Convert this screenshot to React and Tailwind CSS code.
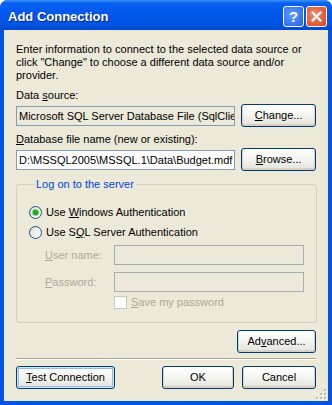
import React from "react";

const font = "font-['Tahoma','Liberation_Sans',sans-serif]";

const XpButton = ({ children, className = "", focused = false }) => (
  <button
    className={`h-[23px] rounded-[3px] border border-[#003c74] bg-gradient-to-b from-white via-[#f4f4f0] to-[#e3e2da] text-[11px] text-black ${
      focused ? "shadow-[inset_0_0_0_1px_#cee7ff,inset_0_0_0_2px_#98b8ea]" : "shadow-[inset_0_-1px_0_1px_#d6d0c5]"
    } ${className}`}
  >
    {children}
  </button>
);

const Radio = ({ checked }) => (
  <span className="flex h-[13px] w-[13px] items-center justify-center rounded-full border border-[#1c5180] bg-gradient-to-br from-[#dcdcd5] to-white">
    {checked && <span className="h-[5px] w-[5px] rounded-full bg-[#21a121] shadow-[0_0_1px_1px_#6ed66e]" />}
  </span>
);

export default function App() {
  return (
    <div className={`${font} w-[332px] h-[405px] flex flex-col rounded-t-[8px] bg-[#0054e3] text-[11px] leading-[13px]`}>
      {/* title bar */}
      <div className="h-[30px] shrink-0 flex items-center justify-between rounded-t-[8px] bg-[linear-gradient(to_bottom,#3d95ff_0%,#0a62f0_10%,#0058ee_40%,#0054e3_80%,#0048d0_100%)] pl-[8px] pr-[5px]">
        <span className="pt-[2px] text-[13px] font-bold text-white [text-shadow:1px_1px_0_#0a1f88]">Add Connection</span>
        <div className="flex gap-[2px] pt-[2px]">
          <div className="flex h-[21px] w-[21px] items-center justify-center rounded-[3px] border border-white bg-[radial-gradient(circle_at_40%_40%,#5d9cff,#2663e0)] text-[15px] font-bold text-white">
            ?
          </div>
          <div className="flex h-[21px] w-[21px] items-center justify-center rounded-[3px] border border-white bg-[radial-gradient(circle_at_40%_40%,#f08a6c,#d54222)]">
            <svg width="11" height="11" viewBox="0 0 11 11">
              <path d="M1.5 1.5 L9.5 9.5 M9.5 1.5 L1.5 9.5" stroke="white" strokeWidth="2.2" strokeLinecap="square" />
            </svg>
          </div>
        </div>
      </div>

      {/* client */}
      <div className="relative flex-1 mx-[4px] mb-[4px] bg-[#ece9d8] px-[12px] pt-[13px] text-black">
        <p>
          Enter information to connect to the selected data source or click "Change" to choose a different data source and/or provider.
        </p>

        <div className="mt-[7px]">
          Data <span className="underline">s</span>ource:
        </div>
        <div className="mt-[2px] flex items-center gap-[6px]">
          <div className="h-[20px] w-[220px] overflow-hidden whitespace-nowrap border border-[#7f9db9] bg-[#ece9d8] px-[2px] leading-[18px]">
            Microsoft SQL Server Database File (SqlClient)
          </div>
          <XpButton className="w-[75px]">
            <span className="underline">C</span>hange...
          </XpButton>
        </div>

        <div className="mt-[6px]">
          <span className="underline">D</span>atabase file name (new or existing):
        </div>
        <div className="mt-[2px] flex items-center gap-[6px]">
          <div className="h-[20px] w-[220px] overflow-hidden whitespace-nowrap border border-[#7f9db9] bg-white px-[2px] leading-[18px]">
            D:\MSSQL2005\MSSQL.1\Data\Budget.mdf
          </div>
          <XpButton className="w-[75px]">
            <span className="underline">B</span>rowse...
          </XpButton>
        </div>

        <fieldset className="mt-[7px] h-[145px] rounded-[3px] border border-[#d0d0bf] px-[12px]">
          <legend className="ml-[5px] px-[2px] text-[#0046d5]">Log on to the server</legend>
          <div className="mt-[15px] flex items-center gap-[4px]">
            <Radio checked />
            <span>
              Use <span className="underline">W</span>indows Authentication
            </span>
          </div>
          <div className="mt-[7px] flex items-center gap-[4px]">
            <Radio />
            <span>
              Use S<span className="underline">Q</span>L Server Authentication
            </span>
          </div>
          <div className="mt-[6px] flex items-center pl-[16px] text-[#aca899]">
            <span className="w-[69px]">
              <span className="underline">U</span>ser name:
            </span>
            <div className="h-[20px] w-[190px] border border-[#a5acb2] bg-[#ece9d8]" />
          </div>
          <div className="mt-[7px] flex items-center pl-[16px] text-[#aca899]">
            <span className="w-[69px]">
              <span className="underline">P</span>assword:
            </span>
            <div className="h-[20px] w-[190px] border border-[#a5acb2] bg-[#ece9d8]" />
          </div>
          <div className="mt-[4px] flex items-center gap-[4px] pl-[85px] text-[#aca899]">
            <span className="h-[13px] w-[13px] border border-[#cac8bb] bg-white" />
            <span>
              <span className="underline">S</span>ave my password
            </span>
          </div>
        </fieldset>

        <div className="mt-[7px] flex justify-end">
          <XpButton className="w-[79px]">
            Ad<span className="underline">v</span>anced...
          </XpButton>
        </div>

        <div className="mt-[5px] border-t border-b border-t-[#aca899] border-b-white" />

        <div className="mt-[6px] flex items-center">
          <XpButton focused className="w-[99px]">
            <span className="underline">T</span>est Connection
          </XpButton>
          <div className="flex-1" />
          <XpButton className="w-[72px]">OK</XpButton>
          <XpButton className="ml-[8px] w-[74px]">Cancel</XpButton>
        </div>

        <svg className="absolute bottom-[1px] right-[1px]" width="12" height="12" viewBox="0 0 12 12">
          {[
            [9, 1],
            [9, 5],
            [5, 5],
            [9, 9],
            [5, 9],
            [1, 9],
          ].map(([x, y]) => (
            <g key={`${x}-${y}`}>
              <rect x={x + 1} y={y + 1} width="2" height="2" fill="#ffffff" />
              <rect x={x} y={y} width="2" height="2" fill="#c1bdae" />
            </g>
          ))}
        </svg>
      </div>
    </div>
  );
}
